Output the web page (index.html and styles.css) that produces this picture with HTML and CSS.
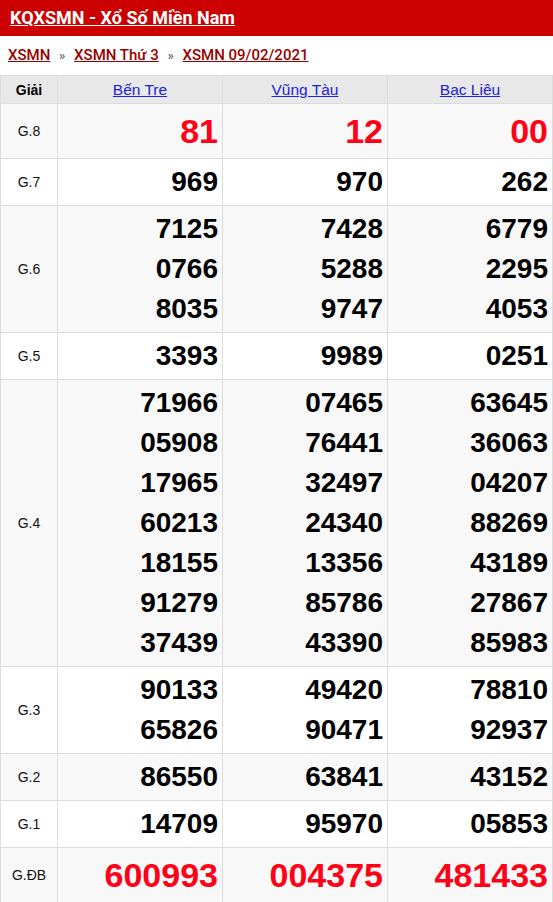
FILE: index.html
```html
<!DOCTYPE html>
<html lang="vi">
<head>
    <meta charset="UTF-8">
    <meta name="viewport" content="width=device-width, initial-scale=1.0">
    <title>KQXSMN - Xổ Số Miền Nam</title>
    <link rel="stylesheet" href="styles.css">
</head>
<body>
    <div class="title-bar">
        <a href="#">KQXSMN - Xổ Số Miền Nam</a>
    </div>

    <div class="breadcrumb">
        <a href="#">XSMN</a>
        <span class="sep">»</span>
        <a href="#">XSMN Thứ 3</a>
        <span class="sep">»</span>
        <a href="#">XSMN 09/02/2021</a>
    </div>

    <table class="results">
        <colgroup>
            <col class="col-prize">
            <col>
            <col>
            <col>
        </colgroup>
        <thead>
            <tr>
                <th class="prize">Giải</th>
                <th><a href="#">Bến Tre</a></th>
                <th><a href="#">Vũng Tàu</a></th>
                <th><a href="#">Bạc Liêu</a></th>
            </tr>
        </thead>
        <tbody id="rows"></tbody>
    </table>

    <script>
        // Kết quả theo từng giải: [tên giải, Bến Tre, Vũng Tàu, Bạc Liêu]
        const prizes = [
            ['G.8', ['81'], ['12'], ['00'], 'big'],
            ['G.7', ['969'], ['970'], ['262']],
            ['G.6', ['7125', '0766', '8035'], ['7428', '5288', '9747'], ['6779', '2295', '4053']],
            ['G.5', ['3393'], ['9989'], ['0251']],
            ['G.4',
                ['71966', '05908', '17965', '60213', '18155', '91279', '37439'],
                ['07465', '76441', '32497', '24340', '13356', '85786', '43390'],
                ['63645', '36063', '04207', '88269', '43189', '27867', '85983']],
            ['G.3', ['90133', '65826'], ['49420', '90471'], ['78810', '92937']],
            ['G.2', ['86550'], ['63841'], ['43152']],
            ['G.1', ['14709'], ['95970'], ['05853']],
            ['G.ĐB', ['600993'], ['004375'], ['481433'], 'big']
        ];

        const tbody = document.getElementById('rows');
        prizes.forEach(function (p) {
            const tr = document.createElement('tr');
            let html = '<td class="prize">' + p[0] + '</td>';
            for (let i = 1; i <= 3; i++) {
                html += '<td class="num' + (p[4] ? ' big' : '') + '">';
                p[i].forEach(function (n) {
                    html += '<div>' + n + '</div>';
                });
                html += '</td>';
            }
            tr.innerHTML = html;
            tbody.appendChild(tr);
        });
    </script>
</body>
</html>
```

FILE: styles.css
```css
body {
    margin: 0;
    font-family: "Liberation Sans", Arial, sans-serif;
    background: #fff;
    color: #000;
}
.title-bar {
    background-color: #cc0000;
    height: 36px;
    line-height: 36px;
    padding: 0 10px;
}
.title-bar a {
    color: #fff;
    font-family: Roboto, "Liberation Sans", sans-serif;
    font-weight: bold;
    font-size: 18px;
}
.breadcrumb {
    padding: 10px 8px;
    line-height: 18px;
    font-family: Roboto, "Liberation Sans", sans-serif;
    font-size: 15px;
    font-weight: 500;
}
.breadcrumb a {
    color: #990000;
}
.breadcrumb .sep {
    color: #666;
    font-size: 13px;
    margin: 0 5px;
}
.results {
    width: 100%;
    border-collapse: collapse;
    table-layout: fixed;
}
.col-prize {
    width: 57px;
}
.results th,
.results td {
    border: 1px solid #dcdcdc;
}
.results th {
    background-color: #e8e8e8;
    height: 27px;
    padding: 0;
    font-size: 15.5px;
    font-weight: normal;
}
.results th.prize {
    font-size: 14px;
    font-weight: bold;
}
.results th a {
    color: #2121d9;
}
.results tbody tr:nth-child(odd) {
    background-color: #f8f8f8;
}
.results td {
    padding: 3px 4px;
}
.results td.prize {
    text-align: center;
    font-size: 14px;
    color: #111;
}
.num {
    text-align: right;
    font-size: 28px;
    font-weight: bold;
    line-height: 40px;
}
.num.big {
    font-size: 34px;
    line-height: 48px;
    color: #ff0016;
}
```
